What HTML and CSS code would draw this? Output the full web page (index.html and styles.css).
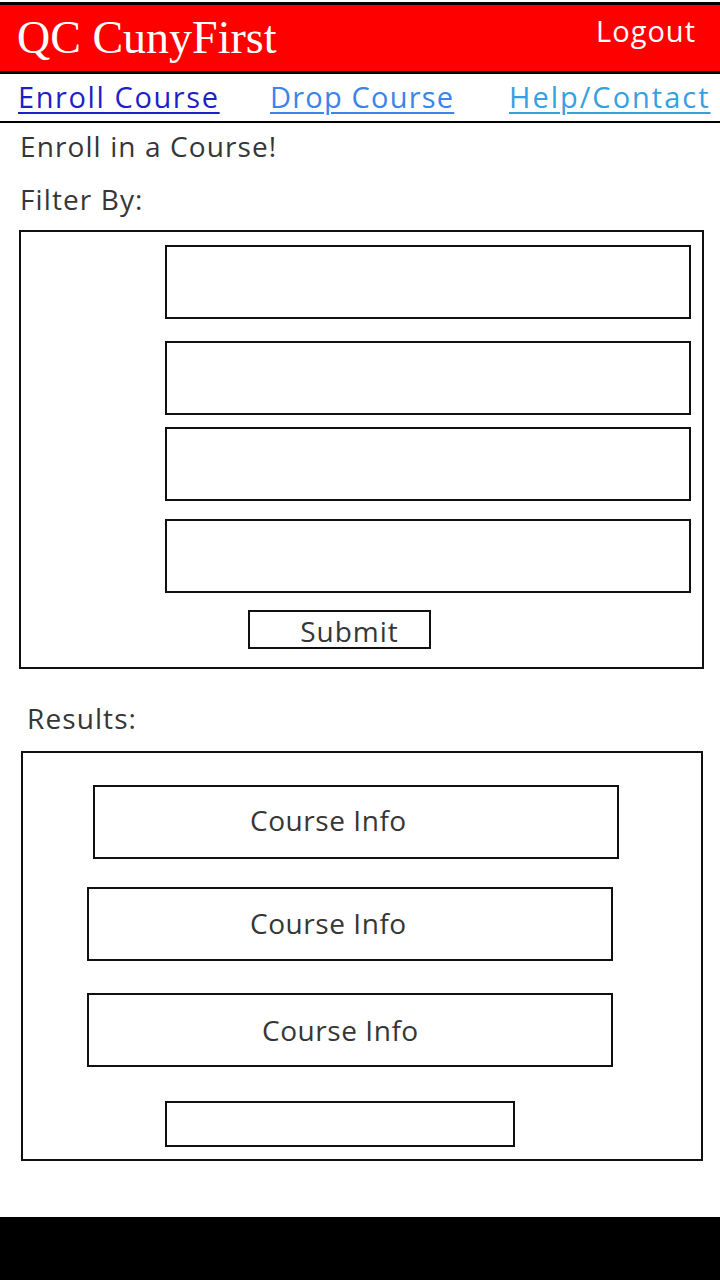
FILE: index.html
```html
<!DOCTYPE html>
<html lang="en">
<head>
<meta charset="utf-8">
<title>QC CunyFirst</title>
<link rel="stylesheet" href="styles.css">
</head>
<body>
<header class="topbar">
  <div class="brand">QC CunyFirst</div>
  <a class="logout" href="#">Logout</a>
</header>
<nav class="nav">
  <a class="nav-link nav-enroll" href="#">Enroll Course</a>
  <a class="nav-link nav-drop" href="#">Drop Course</a>
  <a class="nav-link nav-help" href="#">Help/Contact</a>
</nav>
<main class="main">
  <h1 class="page-title">Enroll in a Course!</h1>
  <h2 class="label label-filter">Filter By:</h2>
  <form class="filter-box">
    <input class="field field-1" type="text">
    <input class="field field-2" type="text">
    <input class="field field-3" type="text">
    <input class="field field-4" type="text">
    <button class="submit" type="button">Submit</button>
  </form>
  <h2 class="label label-results">Results:</h2>
  <section class="results-box">
    <div class="course course-1">Course Info</div>
    <div class="course course-2">Course Info</div>
    <div class="course course-3">Course Info</div>
    <div class="pager"></div>
  </section>
</main>
<footer class="footer"></footer>
</body>
</html>
```
FILE: styles.css
```css
* { box-sizing: border-box; }
html, body { margin: 0; padding: 0; }
body {
  width: 720px;
  background: #fff;
  font-family: "Open Sans", "Noto Sans", sans-serif;
  color: #363636;
}
.topbar {
  margin-top: 2px;
  height: 72px;
  background: #ff0000;
  border-top: 3px solid #000;
  border-bottom: 3px solid #000;
  display: flex;
  justify-content: space-between;
  align-items: flex-start;
}
.brand {
  font-family: "Liberation Serif", "Times New Roman", serif;
  font-size: 46px;
  line-height: 46px;
  color: #fff;
  padding-left: 17px;
  padding-top: 10px;
}
.logout {
  font-size: 29px;
  line-height: 34px;
  letter-spacing: 1px;
  color: #fff;
  text-decoration: none;
  padding-right: 24px;
  padding-top: 9px;
}
.nav {
  height: 49px;
  border-bottom: 2px solid #000;
  display: grid;
  grid-template-columns: 252px 239px 1fr;
  padding-left: 18px;
  align-items: start;
}
.nav-link {
  font-size: 29px;
  line-height: 40px;
  padding-top: 3px;
  letter-spacing: 1.6px;
  text-decoration: underline;
  text-underline-offset: 4px;
  text-decoration-thickness: 2px;
  white-space: nowrap;
}
.nav-enroll { color: #1f1fc8; }
.nav-drop { color: #3a84ea; letter-spacing: 1.2px; }
.nav-help { color: #37a0df; letter-spacing: 2px; }
.main { display: flex; flex-direction: column; align-items: flex-start; }
.page-title, .label {
  margin: 0;
  font-weight: normal;
  font-size: 28px;
  line-height: 38px;
  letter-spacing: 1.1px;
}
.page-title { margin-top: 4px; margin-left: 20px; }
.label-filter { margin-top: 15px; margin-left: 20px; }
.filter-box {
  margin: 12px 0 0 19px;
  width: 685px;
  border: 2px solid #111;
  padding: 13px 0 18px 144px;
  display: flex;
  flex-direction: column;
  align-items: flex-start;
}
.field {
  width: 526px;
  height: 74px;
  border: 2px solid #111;
  background: #fff;
  margin: 0;
  padding: 0;
}
.field-2 { margin-top: 22px; }
.field-3 { margin-top: 12px; }
.field-4 { margin-top: 18px; }
.submit {
  margin: 17px 0 0 83px;
  width: 183px;
  height: 39px;
  border: 2px solid #111;
  background: #fff;
  font-family: inherit;
  color: #363636;
  font-size: 28px;
  line-height: 30px;
  letter-spacing: 1px;
  padding: 2px 0 0 20px;
}
.label-results { margin-top: 30px; margin-left: 27px; }
.results-box {
  margin: 14px 0 0 21px;
  width: 682px;
  border: 2px solid #111;
  padding: 32px 0 12px 0;
  display: flex;
  flex-direction: column;
  align-items: flex-start;
}
.course {
  width: 526px;
  height: 74px;
  border: 2px solid #111;
  display: flex;
  align-items: center;
  font-size: 28px;
  line-height: 38px;
  letter-spacing: 0.55px;
  padding-bottom: 5px;
}
.course-1 { margin-left: 70px; padding-left: 155px; }
.course-2 { margin-left: 64px; margin-top: 28px; padding-left: 161px; padding-bottom: 3px; }
.course-3 { margin-left: 64px; margin-top: 32px; padding-left: 173px; padding-bottom: 0; }
.pager {
  margin: 34px 0 0 142px;
  width: 350px;
  height: 46px;
  border: 2px solid #111;
}
.footer {
  margin-top: 56px;
  height: 63px;
  background: #000;
}
```
